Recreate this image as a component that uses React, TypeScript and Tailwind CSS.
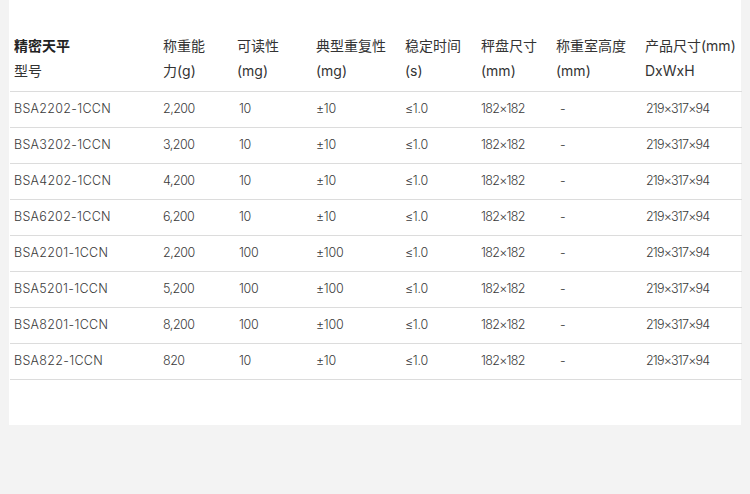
const HEAD = [
  ["精密天平", "型号"],
  ["称重能", "力(g)"],
  ["可读性", "(mg)"],
  ["典型重复性", "(mg)"],
  ["稳定时间", "(s)"],
  ["秤盘尺寸", "(mm)"],
  ["称重室高度", "(mm)"],
  ["产品尺寸(mm)", "DxWxH"],
];

const WIDTHS = ["w-[153px]", "w-[74px]", "w-[79px]", "w-[89px]", "w-[76px]", "w-[75px]", "w-[89px]", "w-[97px]"];

const ROWS = [
  ["BSA2202-1CCN", "2,200", "10", "±10"],
  ["BSA3202-1CCN", "3,200", "10", "±10"],
  ["BSA4202-1CCN", "4,200", "10", "±10"],
  ["BSA6202-1CCN", "6,200", "10", "±10"],
  ["BSA2201-1CCN", "2,200", "100", "±100"],
  ["BSA5201-1CCN", "5,200", "100", "±100"],
  ["BSA8201-1CCN", "8,200", "100", "±100"],
  ["BSA822-1CCN", "820", "10", "±10"],
];

export default function App() {
  return (
    <div className="w-[750px] h-[494px] bg-[#f3f3f3] pl-[9px] pr-[9px] font-['Inter','Noto_Sans_CJK_SC',sans-serif]">
      <div className="bg-white h-[425px] pt-[33px] pl-[1px] pr-[4px]">
        <table className="w-full border-collapse table-fixed">
          <thead>
            <tr className="border-b border-[#dcdcdc]">
              {HEAD.map(([a, b], i) => (
                <th
                  key={i}
                  className={`${WIDTHS[i]} ${i === 0 ? "pl-[4px]" : ""} pb-[8px] text-left align-top font-normal text-[14px] leading-[25px] text-[#333] whitespace-nowrap`}
                >
                  <div className={i === 0 ? "font-bold text-[#222]" : ""}>{a}</div>
                  <div>{b}</div>
                </th>
              ))}
            </tr>
          </thead>
          <tbody>
            {ROWS.map(([model, cap, read, rep]) => (
              <tr key={model} className="border-b border-[#dcdcdc] h-[36px] text-[12.5px] font-light text-[#3a3a3a]">
                <td className="pl-[4px] tracking-[0.3px]">{model}</td>
                <td className="tracking-[-0.5px]">{cap}</td>
                <td className="pl-[2px] tracking-[-0.3px]">{read}</td>
                <td className="tracking-[-0.3px]">{rep}</td>
                <td className="tracking-[-0.3px]">≤1.0</td>
                <td className="tracking-[-0.7px]">182×182</td>
                <td className="pl-[4px]">-</td>
                <td className="pl-[1px] tracking-[-0.8px]">219×317×94</td>
              </tr>
            ))}
          </tbody>
        </table>
      </div>
    </div>
  );
}
